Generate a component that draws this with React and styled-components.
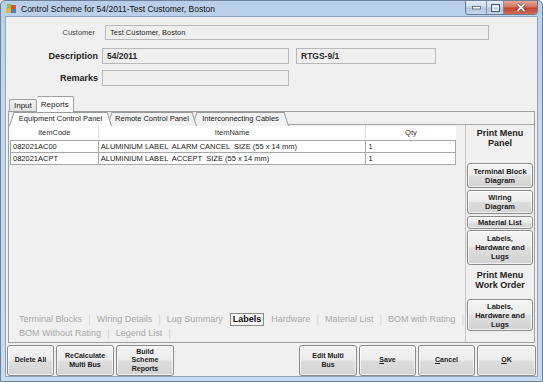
import React from "react";
import styled, { createGlobalStyle } from "styled-components";

const GlobalStyle = createGlobalStyle`
  html, body {
    margin: 0;
    padding: 0;
    width: 543px;
    height: 382px;
    overflow: hidden;
    background: #ffffff;
  }
  * { box-sizing: border-box; }
`;

const Window = styled.div`
  width: 543px;
  height: 382px;
  display: flex;
  flex-direction: column;
  background: linear-gradient(180deg, #b9cfe9 0%, #c6d9ee 30%, #c9dbef 100%);
  border: 1px solid #6d819c;
  border-radius: 5px 5px 0 0;
  font-family: "Liberation Sans", Arial, sans-serif;
  color: #1e1e1e;
`;

const TitleBar = styled.div`
  height: 18px;
  display: flex;
  align-items: center;
  padding-left: 5px;
`;

const TitleText = styled.span`
  font-size: 8.5px;
  margin-left: 4px;
  color: #111;
  flex: 1;
`;

const Controls = styled.div`
  display: flex;
  align-self: flex-start;
  margin-right: 4px;
  border: 1px solid #6a7c94;
  border-top: none;
  border-radius: 0 0 4px 4px;
  overflow: hidden;
`;

const CtrlButton = styled.div`
  width: ${({ $w }) => $w}px;
  height: 13px;
  display: flex;
  align-items: center;
  justify-content: center;
  background: ${({ $close }) =>
    $close
      ? "linear-gradient(180deg, #e9a99c 0%, #d5735f 45%, #c1432c 55%, #d36d55 100%)"
      : "linear-gradient(180deg, #e6eef8 0%, #cbd9ea 45%, #b2c5dd 55%, #c6d6ea 100%)"};
  border-left: ${({ $first }) => ($first ? "none" : "1px solid #7d8ea6")};
`;

const Client = styled.div`
  flex: 1;
  margin: 0 4px 4px 4px;
  background: #f0f0f0;
  border: 1px solid #8ea3bf;
  display: flex;
  flex-direction: column;
  padding: 8px 1px 0 1px;
`;

const FormRow = styled.div`
  display: flex;
  align-items: center;
  gap: 7px;
  margin-bottom: ${({ $mb }) => $mb}px;
`;

const Label = styled.div`
  width: 91px;
  text-align: right;
  font-size: ${({ $bold }) => ($bold ? "9px" : "7.5px")};
  font-weight: ${({ $bold }) => ($bold ? 700 : 400)};
  color: ${({ $bold }) => ($bold ? "#222" : "#444")};
  margin-right: ${({ $bold }) => ($bold ? "-3px" : "0")};
  padding-right: ${({ $bold }) => ($bold ? "0" : "3px")};
`;

const Field = styled.div`
  width: ${({ $w }) => $w}px;
  height: ${({ $h }) => $h || 16}px;
  background: #efefef;
  border: 1px solid #b9b9b9;
  display: flex;
  align-items: center;
  padding-left: 4px;
  font-size: ${({ $bold }) => ($bold ? "8.5px" : "7.5px")};
  font-weight: ${({ $bold }) => ($bold ? 700 : 400)};
  color: #2a2a2a;
`;

const TabStrip = styled.div`
  display: flex;
  align-items: flex-end;
  height: 16px;
  margin-top: 2px;
  padding-left: 2px;
`;

const Tab = styled.div`
  height: ${({ $active }) => ($active ? 16 : 13)}px;
  padding: 0 4px;
  margin-bottom: -1px;
  display: flex;
  align-items: center;
  font-size: 8px;
  color: #222;
  background: ${({ $active }) =>
    $active ? "#ffffff" : "linear-gradient(180deg, #f3f3f3, #e3e3e3)"};
  border: 1px solid #a0a0a0;
  border-bottom: ${({ $active }) => ($active ? "none" : "1px solid #a0a0a0")};
  border-left: ${({ $active }) => ($active ? "none" : "1px solid #a0a0a0")};
  border-radius: 2px 2px 0 0;
  position: relative;
  z-index: ${({ $active }) => ($active ? 2 : 1)};
`;

const TabPanel = styled.div`
  height: 232px;
  margin: 0 1px;
  border: 1px solid #a0a0a0;
  background: #f0f0f0;
  display: flex;
  flex-direction: column;
`;

const SubTabStrip = styled.div`
  display: flex;
  height: 13px;
  padding-left: 0;
  border-bottom: 1px solid #a4a4a4;
`;

const SubTab = styled.div`
  position: relative;
  z-index: ${({ $z }) => $z};
  height: 13px;
  width: ${({ $w }) => $w}px;
  margin-right: -5px;
  display: flex;
  align-items: center;
  justify-content: center;
  font-size: 7.5px;
  color: #222;

  &::before,
  &::after {
    content: "";
    position: absolute;
    top: 0;
    bottom: -1px;
    width: 60%;
    z-index: -1;
    background: ${({ $active }) => ($active ? "#ffffff" : "#f2f2f2")};
    border-top: 1px solid #9a9a9a;
  }
  &::before {
    left: 0;
    border-left: 1px solid #9a9a9a;
    transform-origin: bottom left;
    transform: skewX(-18deg);
  }
  &::after {
    right: 0;
    border-right: 1px solid #9a9a9a;
    transform-origin: bottom right;
    transform: skewX(18deg);
  }
`;

const Body = styled.div`
  flex: 1;
  display: flex;
`;

const LeftColumn = styled.div`
  flex: 1;
  min-width: 0;
  display: flex;
  flex-direction: column;
  justify-content: space-between;
  padding: 1px 0 1px 1px;
`;

const Grid = styled.table`
  width: 446px;
  border-collapse: collapse;
  font-size: 7.5px;
  color: #222;
  background: #ffffff;

  th {
    height: 14px;
    font-weight: 400;
    color: #333;
    border-left: 1px solid #dcdcdc;
    border-bottom: 1px solid #a8a8a8;
  }
  th:first-child { border-left: none; }
  td {
    height: 12px;
    padding: 0 2px;
    border: 1px solid #a8a8a8;
    white-space: pre;
  }
`;

const LinkArea = styled.div`
  display: flex;
  flex-direction: column;
  padding-left: 9px;
  margin-bottom: 1px;
`;

const LinkRow = styled.div`
  display: flex;
  align-items: center;
  height: 14px;
  white-space: nowrap;
`;

const LinkItem = styled.span`
  flex-shrink: 0;
  font-size: 9px;
  color: ${({ $active }) => ($active ? "#111" : "#a9a9a9")};
  font-weight: ${({ $active }) => ($active ? 700 : 400)};
  border: ${({ $active }) => ($active ? "1px solid #8a8a8a" : "none")};
  background: ${({ $active }) => ($active ? "#f7f7f7" : "transparent")};
  padding: ${({ $active }) => ($active ? "0 2px" : "0")};
  margin: ${({ $active }) => ($active ? "0 7px" : "0")};
  line-height: 11px;
`;

const Sep = styled.span`
  flex-shrink: 0;
  font-size: 10px;
  color: #d0d0d0;
  margin: 0 6px 0 6px;
`;

const PrintPanel = styled.div`
  width: 69px;
  flex-shrink: 0;
  border-left: 1px solid #c8c8c8;
  display: flex;
  flex-direction: column;
  align-items: stretch;
  padding: 2px 1px 0 1px;
`;

const PanelTitle = styled.div`
  font-size: 9px;
  font-weight: 700;
  text-align: center;
  line-height: 10px;
  color: #222;
  margin-top: ${({ $mt }) => $mt}px;
  margin-bottom: ${({ $mb }) => $mb}px;
`;

const WinButton = styled.div`
  height: ${({ $h }) => $h}px;
  width: ${({ $w }) => ($w ? `${$w}px` : "auto")};
  margin-bottom: ${({ $mb }) => $mb || 0}px;
  display: flex;
  align-items: center;
  justify-content: center;
  text-align: center;
  font-size: ${({ $fs }) => $fs || 7.5}px;
  font-weight: 700;
  line-height: 1.2;
  color: #1c1c1c;
  border: 1px solid #8a8a8a;
  border-radius: 3px;
  background: linear-gradient(180deg, #f4f4f4 0%, #ececec 48%, #dedede 52%, #d2d2d2 100%);
  box-shadow: inset 0 0 0 1px rgba(255, 255, 255, 0.7);

  u { text-decoration: underline; }
`;

const BottomBar = styled.div`
  display: flex;
  align-items: center;
  gap: 2px;
  margin-top: 2px;
  height: 31px;
`;

const Spacer = styled.div`
  flex: 1;
`;

const AppIcon = () => (
  <svg width="11" height="10" viewBox="0 0 11 10">
    <rect x="0" y="4" width="5" height="5" fill="#e7b42b" />
    <rect x="5" y="1" width="5" height="4" fill="#d9533c" />
    <rect x="5" y="5" width="5" height="4" fill="#4a7fc8" />
    <rect x="1" y="0" width="4" height="4" fill="#8bbd55" />
  </svg>
);

const subTabs = [
  { label: "Equipment Control Panel", w: 103, active: true },
  { label: "Remote Control Panel", w: 90 },
  { label: "Interconnecting Cables", w: 97 },
];

const rows = [
  { code: "082021AC00", name: "ALUMINIUM LABEL  ALARM CANCEL  SIZE (55 x 14 mm)", qty: "1" },
  { code: "082021ACPT", name: "ALUMINIUM LABEL  ACCEPT  SIZE (55 x 14 mm)", qty: "1" },
];

const ACTIVE_REPORT = "Labels";

const linkRows = [
  ["Terminal Blocks", "Wiring Details", "Lug Summary", "Labels", "Hardware", "Material List", "BOM with Rating"],
  ["BOM Without Rating", "Legend List"],
];

const ReportLinks = () => (
  <LinkArea>
    {linkRows.map((row, ri) => (
      <LinkRow key={ri}>
        {row.map((l, i) => {
          const active = l === ACTIVE_REPORT;
          const nextActive = row[i + 1] === ACTIVE_REPORT;
          return (
            <React.Fragment key={l}>
              <LinkItem $active={active}>{l}</LinkItem>
              {!active && !nextActive && <Sep>|</Sep>}
            </React.Fragment>
          );
        })}
      </LinkRow>
    ))}
  </LinkArea>
);

const App = () => (
  <>
    <GlobalStyle />
    <Window>
      <TitleBar>
        <AppIcon />
        <TitleText>Control Scheme for 54/2011-Test Customer, Boston</TitleText>
        <Controls>
          <CtrlButton $w={20} $first>
            <svg width="9" height="4"><rect x="0.5" y="0.5" width="8" height="2.5" fill="#fff" stroke="#4d5d74" strokeWidth="0.8" /></svg>
          </CtrlButton>
          <CtrlButton $w={17}>
            <svg width="9" height="8"><rect x="0.5" y="0.5" width="8" height="7" fill="none" stroke="#4d5d74" strokeWidth="1" /><rect x="2" y="2.5" width="5" height="3.5" fill="none" stroke="#fff" strokeWidth="1" /></svg>
          </CtrlButton>
          <CtrlButton $w={34} $close>
            <svg width="10" height="9" viewBox="0 0 10 9"><path d="M1.5 1 L8.5 8 M8.5 1 L1.5 8" stroke="#5b2a22" strokeWidth="3" /><path d="M1.5 1 L8.5 8 M8.5 1 L1.5 8" stroke="#fff" strokeWidth="1.8" /></svg>
          </CtrlButton>
        </Controls>
      </TitleBar>

      <Client>
        <FormRow $mb={8}>
          <Label>Customer</Label>
          <Field $w={384} $h={15}>Test Customer, Boston</Field>
        </FormRow>
        <FormRow $mb={6}>
          <Label $bold>Description</Label>
          <Field $w={187} $bold>54/2011</Field>
          <Field $w={140} $bold>RTGS-9/1</Field>
        </FormRow>
        <FormRow $mb={7}>
          <Label $bold>Remarks</Label>
          <Field $w={187} />
        </FormRow>

        <TabStrip>
          <Tab>Input</Tab>
          <Tab $active>Reports</Tab>
        </TabStrip>
        <TabPanel>
          <SubTabStrip>
            {subTabs.map((t, i) => (
              <SubTab key={t.label} $w={t.w} $active={t.active} $z={subTabs.length - i}>
                {t.label}
              </SubTab>
            ))}
          </SubTabStrip>
          <Body>
            <LeftColumn>
              <Grid>
                <colgroup>
                  <col style={{ width: 88 }} />
                  <col style={{ width: 268 }} />
                  <col style={{ width: 90 }} />
                </colgroup>
                <thead>
                  <tr>
                    <th>ItemCode</th>
                    <th>ItemName</th>
                    <th>Qty</th>
                  </tr>
                </thead>
                <tbody>
                  {rows.map((r) => (
                    <tr key={r.code}>
                      <td>{r.code}</td>
                      <td>{r.name}</td>
                      <td>{r.qty}</td>
                    </tr>
                  ))}
                </tbody>
              </Grid>
              <ReportLinks />
            </LeftColumn>
            <PrintPanel>
              <PanelTitle $mt={1} $mb={15}>Print Menu<br />Panel</PanelTitle>
              <WinButton $h={25} $mb={2}>Terminal Block<br />Diagram</WinButton>
              <WinButton $h={24} $mb={2}>Wiring<br />Diagram</WinButton>
              <WinButton $h={13} $mb={1}>Material List</WinButton>
              <WinButton $h={35}>Labels,<br />Hardware and<br />Lugs</WinButton>
              <PanelTitle $mt={5} $mb={9}>Print Menu<br />Work Order</PanelTitle>
              <WinButton $h={32}>Labels,<br />Hardware and<br />Lugs</WinButton>
            </PrintPanel>
          </Body>
        </TabPanel>

        <BottomBar>
          <WinButton $h={31} $w={47} $fs={7}>Delete All</WinButton>
          <WinButton $h={31} $w={58} $fs={7}>ReCalculate<br />Multi Bus</WinButton>
          <WinButton $h={31} $w={58} $fs={7}>Build<br />Scheme<br />Reports</WinButton>
          <Spacer />
          <WinButton $h={31} $w={58} $fs={7}>Edit Multi<br />Bus</WinButton>
          <WinButton $h={31} $w={57} $fs={7}><span><u>S</u>ave</span></WinButton>
          <WinButton $h={31} $w={57} $fs={7}><span><u>C</u>ancel</span></WinButton>
          <WinButton $h={31} $w={59} $fs={7}><span><u>O</u>K</span></WinButton>
        </BottomBar>
      </Client>
    </Window>
  </>
);

export default App;
